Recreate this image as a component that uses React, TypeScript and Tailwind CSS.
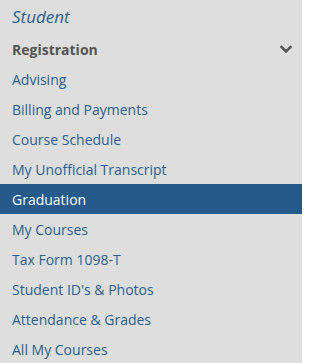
import React from "react";

const links = [
  "Advising",
  "Billing and Payments",
  "Course Schedule",
  "My Unofficial Transcript",
  "Graduation",
  "My Courses",
  "Tax Form 1098-T",
  "Student ID's & Photos",
  "Attendance & Grades",
  "All My Courses",
];

const App = () => {
  return (
    <div className="w-[302px] h-[363px] overflow-hidden bg-[#dedede] font-['Open_Sans',sans-serif]">
      <div className="h-[34px] flex items-center px-3 text-[17px] italic text-[#2b5f91]">
        Student
      </div>
      <div className="h-[30px] flex items-center justify-between pl-3 pr-[10px] text-[14px] font-bold text-[#555555]">
        <span>Registration</span>
        <svg width="12" height="9" viewBox="0 0 12 9" fill="none">
          <path
            d="M1.5 2 L6 6.5 L10.5 2"
            stroke="#555555"
            strokeWidth="2.6"
            strokeLinecap="square"
          />
        </svg>
      </div>
      <ul>
        {links.map((label) => {
          const active = label === "Graduation";
          return (
            <li key={label}>
              <a
                href="#"
                className={
                  active
                    ? "h-[30px] flex items-center px-3 text-[14px] bg-[#255a8a] text-white"
                    : "h-[30px] flex items-center px-3 text-[14px] text-[#2b5f91]"
                }
              >
                {label}
              </a>
            </li>
          );
        })}
      </ul>
    </div>
  );
};

export default App;
